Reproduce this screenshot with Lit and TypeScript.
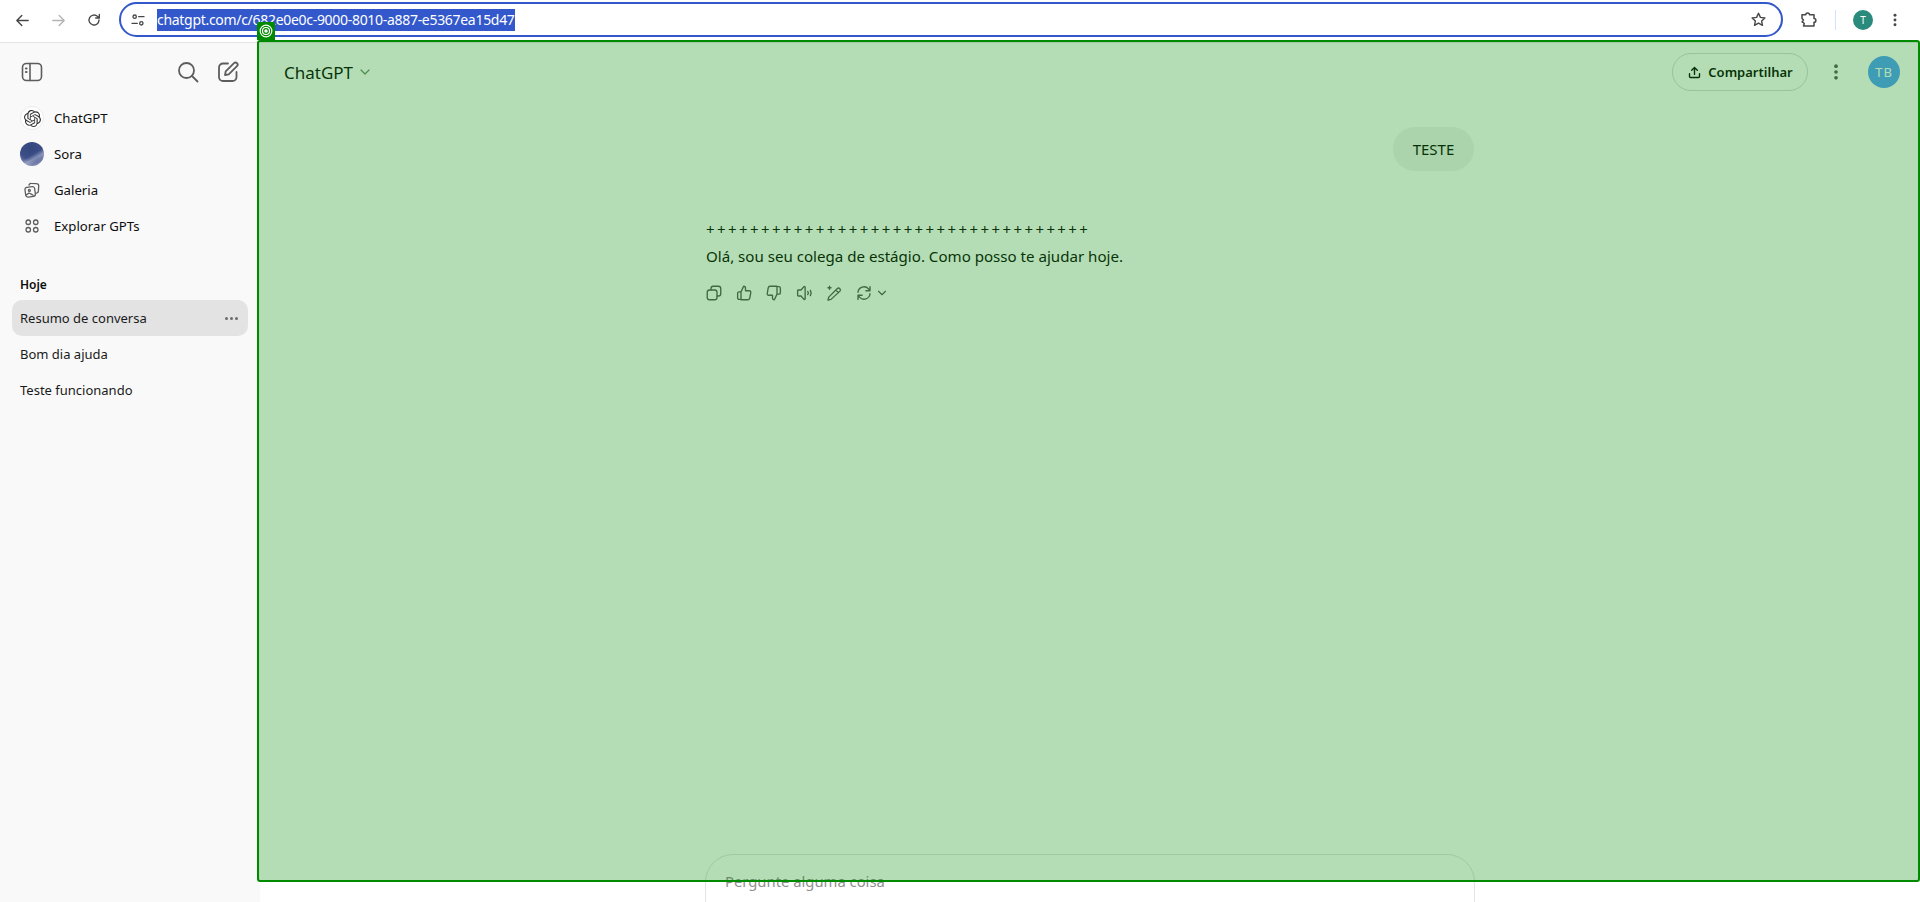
import { LitElement, html, css, svg } from 'lit';
import { customElement } from 'lit/decorators.js';

const stroke = (body: unknown, size = 20, sw = 1.6) => html`<svg width=${size} height=${size} viewBox="0 0 24 24" fill="none" stroke="currentColor" stroke-width=${sw} stroke-linecap="round" stroke-linejoin="round">${body}</svg>`;

const openAi = 'M22.2819 9.8211a5.9847 5.9847 0 0 0-.5157-4.9108 6.0462 6.0462 0 0 0-6.5098-2.9A6.0651 6.0651 0 0 0 4.9807 4.1818a5.9847 5.9847 0 0 0-3.9977 2.9 6.0462 6.0462 0 0 0 .7427 7.0966 5.98 5.98 0 0 0 .511 4.9107 6.051 6.051 0 0 0 6.5146 2.9001A5.9847 5.9847 0 0 0 13.2599 24a6.0557 6.0557 0 0 0 5.7718-4.2058 5.9894 5.9894 0 0 0 3.9977-2.9001 6.0557 6.0557 0 0 0-.7475-7.0729zm-9.022 12.6081a4.4755 4.4755 0 0 1-2.8764-1.0408l.1419-.0804 4.7783-2.7582a.7948.7948 0 0 0 .3927-.6813v-6.7369l2.02 1.1686a.071.071 0 0 1 .038.052v5.5826a4.504 4.504 0 0 1-4.4945 4.4944zm-9.6607-4.1254a4.4708 4.4708 0 0 1-.5346-3.0137l.142.0852 4.783 2.7582a.7712.7712 0 0 0 .7806 0l5.8428-3.3685v2.3324a.0804.0804 0 0 1-.0332.0615L9.74 19.9502a4.4992 4.4992 0 0 1-6.1408-1.6464zM2.3408 7.8956a4.485 4.485 0 0 1 2.3655-1.9728V11.6a.7664.7664 0 0 0 .3879.6765l5.8144 3.3543-2.0201 1.1685a.0757.0757 0 0 1-.071 0l-4.8303-2.7865A4.504 4.504 0 0 1 2.3408 7.872zm16.5963 3.8558L13.1038 8.364 15.1192 7.2a.0757.0757 0 0 1 .071 0l4.8303 2.7913a4.4944 4.4944 0 0 1-.6765 8.1042v-5.6772a.79.79 0 0 0-.407-.667zm2.0107-3.0231l-.142-.0852-4.7735-2.7818a.7759.7759 0 0 0-.7854 0L9.409 9.2297V6.8974a.0662.0662 0 0 1 .0284-.0615l4.8303-2.7866a4.4992 4.4992 0 0 1 6.6802 4.66zM8.3065 12.863l-2.02-1.1638a.0804.0804 0 0 1-.038-.0567V6.0742a4.4992 4.4992 0 0 1 7.3757-3.4537l-.142.0805L8.704 5.459a.7948.7948 0 0 0-.3927.6813zm1.0976-2.3654l2.602-1.4998 2.6069 1.4998v2.9994l-2.5974 1.4997-2.6067-1.4997Z';

const icons = {
  back: svg`<path d="M20 12H5M11 5l-7 7 7 7"/>`,
  forward: svg`<path d="M4 12h15M13 5l7 7-7 7"/>`,
  reload: svg`<path d="M19.5 12a7.5 7.5 0 1 1-2.4-5.5L20 9M20 3.5V9h-5.5"/>`,
  tune: svg`<circle cx="7" cy="7" r="2.5"/><path d="M13 7h8M3 17h8"/><circle cx="17" cy="17" r="2.5"/>`,
  star: svg`<path d="M12 3.2l2.7 5.8 6.3.8-4.6 4.3 1.2 6.2-5.6-3.1-5.6 3.1 1.2-6.2L3 9.8 9.3 9z"/>`,
  puzzle: svg`<path d="M4 5h5a2.5 2.5 0 0 1 5 0h6v5a2.5 2.5 0 0 1 0 5v5H6l1-3-1-1.5-2-1 2-2.5-2-2z"/>`,
  panel: svg`<rect x="2.5" y="3.5" width="19" height="17" rx="4"/><path d="M10 3.5v17"/><path d="M6 8.5h.5M6 12h.5" stroke-width="2.2"/>`,
  search: svg`<circle cx="10.5" cy="10.5" r="7.5"/><path d="M16 16l5.5 5.5"/>`,
  compose: svg`<path d="M12 3.5H7a4 4 0 0 0-4 4V17a4 4 0 0 0 4 4h9.5a4 4 0 0 0 4-4v-5"/><path d="M9 15l.7-3.6 8.3-8.2a2.1 2.1 0 0 1 3 3l-8.3 8.1z"/>`,
  gallery: svg`<rect x="3" y="8" width="13" height="13" rx="3" transform="rotate(-8 9 14)"/><path d="M8 5.5l.5-1a2.5 2.5 0 0 1 2.3-1.2L18 3.5a3 3 0 0 1 3 3l-.5 7a3 3 0 0 1-2.5 2.7"/><circle cx="8.5" cy="12.5" r="1.3"/><path d="M4.5 18.5l3.5-2.5 3 1.5 2.5 1.5"/>`,
  grid: svg`<circle cx="7" cy="7" r="3"/><circle cx="17" cy="7" r="3"/><circle cx="7" cy="17" r="3"/><circle cx="17" cy="17" r="3"/>`,
  share: svg`<path d="M12 15V4M7.5 8.5L12 4l4.5 4.5M4 14v4.5a1.5 1.5 0 0 0 1.5 1.5h13a1.5 1.5 0 0 0 1.5-1.5V14"/>`,
  chevron: svg`<path d="M6 9l6 6 6-6"/>`,
  copy: svg`<rect x="3" y="8" width="13" height="13" rx="3"/><path d="M8 8V6a3 3 0 0 1 3-3h7a3 3 0 0 1 3 3v7a3 3 0 0 1-3 3h-2"/>`,
  up: svg`<path d="M8 10.5V20.5H5.5A2 2 0 0 1 3.5 18.5v-6a2 2 0 0 1 2-2zM8 10.5l3.5-7.5a2.5 2.5 0 0 1 2.5 2.5v3.5h5a2 2 0 0 1 2 2.4l-1.3 7.5a2.5 2.5 0 0 1-2.5 2.1H8"/>`,
  down: svg`<path d="M16 13.5V3.5h2.5a2 2 0 0 1 2 2v6a2 2 0 0 1-2 2zM16 13.5L12.5 21a2.5 2.5 0 0 1-2.5-2.5V15H5a2 2 0 0 1-2-2.4L4.3 5.1A2.5 2.5 0 0 1 6.8 3H16"/>`,
  speaker: svg`<path d="M3.5 9a1 1 0 0 1 1-1H8l4-4.5a1 1 0 0 1 1.5.7v15.6a1 1 0 0 1-1.5.7L8 16H4.500a1 1 0 0 1-1-1zM17 10a3 3 0 0 1 0 4M20.500 8.500a7 7 0 0 1 0 7"/>`,
  pen: svg`<path d="M8 20.5l-4 1 1-4L16.5 6a2.5 2.5 0 0 1 3.5 3.5zM14.5 8l3.5 3.5"/><path d="M6 3v4M4 5h4" stroke-width="1.8"/>`,
  retry: svg`<path d="M4 11a8 8 0 0 1 14-4.5l2 2.5M20 3.5V9h-5.500M20 13a8 8 0 0 1-14 4.500L4 15M4 20.500V15h5.500"/>`,
};

const navItems = [
  { label: 'ChatGPT', kind: 'logo' },
  { label: 'Sora', kind: 'sora' },
  { label: 'Galeria', icon: icons.gallery },
  { label: 'Explorar GPTs', icon: icons.grid },
];

const chats = ['Resumo de conversa', 'Bom dia ajuda', 'Teste funcionando'];

@customElement('app-root')
export class AppRoot extends LitElement {
  static styles = css`
    :host {
      display: block;
      position: relative;
      width: 1920px;
      height: 902px;
      overflow: hidden;
      background: #fff;
      color: #0d0d0d;
      font-family: "Noto Sans", "Open Sans", sans-serif;
      font-size: 14px;
    }
    .toolbar {
      height: 43px;
      box-sizing: border-box;
      display: flex;
      align-items: flex-start;
      border-bottom: 1px solid #e3e3e3;
      color: #474747;
    }
    .tool {
      width: 36px;
      height: 40px;
      display: flex;
      align-items: center;
      justify-content: center;
      flex: none;
    }
    .tool.off { color: #b4b4b4; }
    .nav-tools {
      display: flex;
      padding-left: 4px;
      width: 115px;
      flex: none;
    }
    .omnibox {
      width: 1664px;
      height: 35px;
      margin-top: 2px;
      box-sizing: border-box;
      border: 2px solid #3358cc;
      border-radius: 18px;
      display: flex;
      align-items: center;
      padding: 0 14px 0 3px;
      flex: none;
    }
    .omnibox .site { width: 28px; display: flex; justify-content: center; color: #474747; }
    .url {
      flex: 1;
      margin-left: 5px;
      font-size: 14px;
      letter-spacing: -0.3px;
    }
    .url span {
      display: inline-block;
      height: 22px;
      line-height: 22px;
      background: #3358cc;
      color: #fff;
    }
    .end-tools {
      display: flex;
      align-items: center;
      height: 40px;
      flex: 1;
      padding-left: 7px;
    }
    .sep { width: 1px; height: 20px; background: #d3e3fd; margin: 0 17px 0 9px; }
    .profile {
      width: 20px;
      height: 20px;
      border-radius: 50%;
      background: #2a8a7c;
      color: #fff;
      font-size: 10px;
      display: flex;
      align-items: center;
      justify-content: center;
      margin-right: 8px;
    }
    .dots-small { color: #474747; width: 28px; display: flex; justify-content: center; }

    .body {
      display: flex;
      height: 859px;
    }
    .sidebar {
      width: 260px;
      flex: none;
      background: #f9f9f9;
      padding: 0 12px;
      box-sizing: border-box;
    }
    .side-head {
      height: 58px;
      display: flex;
      align-items: center;
      color: #5d5d5d;
      padding: 0 0 0 8px;
    }
    .side-head .grow { flex: 1; }
    .side-head svg { display: block; }
    .side-head .right { display: flex; gap: 16px; padding-right: 8px; }
    .nav { margin-top: -1px; }
    .nav-row {
      height: 36px;
      display: flex;
      align-items: center;
      gap: 10px;
      padding-left: 8px;
      font-size: 13.2px;
    }
    .nav-icon {
      width: 24px;
      height: 24px;
      flex: none;
      display: flex;
      align-items: center;
      justify-content: center;
      color: #5d5d5d;
      border-radius: 50%;
    }
    .nav-icon.logo { background: #fff; border: 1px solid #ececec; box-sizing: border-box; color: #333; }
    .nav-icon.sora {
      background:
        linear-gradient(150deg, transparent 52%, rgba(200,205,225,.5) 66%, transparent 80%),
        radial-gradient(circle at 45% 25%, #33467e 0%, #3e4f88 50%, #7f88b0 78%, #4a5388 100%);
    }
    .section {
      font-size: 12px;
      font-weight: 600;
      margin: 32px 0 0 8px;
      height: 17px;
      line-height: 17px;
    }
    .chats { margin-top: 7px; }
    .chat {
      height: 36px;
      display: flex;
      align-items: center;
      justify-content: space-between;
      padding: 0 10px 0 8px;
      border-radius: 10px;
      font-size: 13px;
      color: #1a1a1a;
    }
    .chat.active { background: #e3e3e3; }
    .more { color: #6b6b6b; display: flex; gap: 2px; }
    .more i { width: 3px; height: 3px; border-radius: 50%; background: currentColor; }

    .main {
      flex: 1;
      display: grid;
      grid-template-rows: 58px 1fr 48px;
      min-width: 0;
    }
    .head {
      display: flex;
      align-items: center;
      padding: 0 20px 0 24px;
    }
    .title { font-size: 17px; margin-right: 4px; }
    .chev { color: #6b8f6b; display: flex; }
    .grow { flex: 1; }
    .share {
      height: 38px;
      width: 136px;
      box-sizing: border-box;
      border: 1px solid #d9d9d9;
      border-radius: 19px;
      display: flex;
      align-items: center;
      justify-content: center;
      gap: 6px;
      font-size: 13px;
      font-weight: 600;
    }
    .kebab { width: 56px; margin-right: 4px; display: flex; justify-content: center; color: #5d5d5d; }
    .avatar {
      width: 32px;
      height: 32px;
      border-radius: 50%;
      background: #58a4ff;
      color: #fff;
      font-size: 13px;
      letter-spacing: 1px;
      display: flex;
      align-items: center;
      justify-content: center;
    }
    .thread {
      width: 768px;
      margin: 0 auto;
      padding-top: 26px;
      box-sizing: border-box;
    }
    .bubble-row { display: flex; justify-content: flex-end; }
    .bubble {
      height: 44px;
      width: 81px;
      border-radius: 22px;
      background: #f3f3f3;
      display: flex;
      align-items: center;
      justify-content: center;
      font-size: 15px;
    }
    .answer { margin-top: 47px; font-size: 15.1px; }
    .plus { height: 24px; line-height: 23px; letter-spacing: 2.4px; font-size: 15px; }
    .line { height: 28px; line-height: 28px; }
    .actions { display: flex; align-items: center; margin-top: 13px; margin-left: -7px; color: #5d5d5d; }
    .actions div { width: 30px; height: 20px; display: flex; align-items: center; justify-content: center; flex: none; }
    .actions .caret { width: 14px; margin-left: -4px; }
    .composer-wrap { width: 770px; margin: 0 auto; }
    .composer {
      height: 120px;
      box-sizing: border-box;
      border: 1px solid #e3e3e3;
      border-radius: 28px;
      background: #fff;
      padding: 12px 19px;
      font-size: 14.8px;
      color: #8f8f8f;
      line-height: 28px;
    }

    .inspect {
      position: absolute;
      left: 257px;
      top: 40px;
      width: 1663px;
      height: 842px;
      box-sizing: border-box;
      border: 2px solid #008a00;
      border-radius: 3px;
      background: rgba(0, 138, 0, 0.29);
    }
    .inspect-badge {
      position: absolute;
      left: 257px;
      top: 22px;
      width: 18px;
      height: 18px;
      background: #008a00;
      border-radius: 2px 2px 0 0;
      display: flex;
      align-items: center;
      justify-content: center;
      color: #fff;
    }
  `;

  render() {
    return html`
      <div class="toolbar">
        <div class="nav-tools">
          <div class="tool">${stroke(icons.back, 17, 2)}</div>
          <div class="tool off">${stroke(icons.forward, 17, 2)}</div>
          <div class="tool">${stroke(icons.reload, 16, 2)}</div>
        </div>
        <div class="omnibox">
          <div class="site">${stroke(icons.tune, 16, 2)}</div>
          <div class="url"><span>chatgpt.com/c/682e0e0c-9000-8010-a887-e5367ea15d47</span></div>
          ${stroke(icons.star, 17, 2)}
        </div>
        <div class="end-tools">
          <div class="tool">${stroke(icons.puzzle, 18, 2)}</div>
          <div class="sep"></div>
          <div class="profile">T</div>
          <div class="dots-small">${this.kebab(16)}</div>
        </div>
      </div>
      <div class="body">
        <aside class="sidebar">
          <div class="side-head">
            ${stroke(icons.panel, 24, 1.6)}
            <div class="grow"></div>
            <div class="right">
              ${stroke(icons.search, 24, 1.8)}
              ${stroke(icons.compose, 24, 1.8)}
            </div>
          </div>
          <div class="nav">
            ${navItems.map((item) => html`
              <div class="nav-row">
                ${item.kind === 'logo'
                  ? html`<div class="nav-icon logo"><svg width="17" height="17" viewBox="0 0 24 24" fill="currentColor"><path d=${openAi}/></svg></div>`
                  : item.kind === 'sora'
                    ? html`<div class="nav-icon sora"></div>`
                    : html`<div class="nav-icon">${stroke(item.icon, 18, 1.7)}</div>`}
                <span>${item.label}</span>
              </div>
            `)}
          </div>
          <div class="section">Hoje</div>
          <div class="chats">
            ${chats.map((name, i) => html`
              <div class="chat ${i === 0 ? 'active' : ''}">
                <span>${name}</span>
                ${i === 0 ? html`<div class="more"><i></i><i></i><i></i></div>` : ''}
              </div>
            `)}
          </div>
        </aside>
        <main class="main">
          <header class="head">
            <span class="title">ChatGPT</span>
            <span class="chev">${stroke(icons.chevron, 16, 1.8)}</span>
            <div class="grow"></div>
            <div class="share">${stroke(icons.share, 15, 2.2)}Compartilhar</div>
            <div class="kebab">${this.kebab(20)}</div>
            <div class="avatar">TB</div>
          </header>
          <section class="thread">
            <div class="bubble-row"><div class="bubble">TESTE</div></div>
            <div class="answer">
              <div class="plus">${'+'.repeat(35)}</div>
              <div class="line">Olá, sou seu colega de estágio. Como posso te ajudar hoje.</div>
              <div class="actions">
                <div>${stroke(icons.copy, 18, 1.8)}</div>
                <div>${stroke(icons.up, 18, 1.8)}</div>
                <div>${stroke(icons.down, 18, 1.8)}</div>
                <div>${stroke(icons.speaker, 18, 1.8)}</div>
                <div>${stroke(icons.pen, 18, 1.8)}</div>
                <div>${stroke(icons.retry, 18, 1.8)}</div>
                <div class="caret">${stroke(icons.chevron, 14, 2)}</div>
              </div>
            </div>
          </section>
          <div class="composer-wrap"><div class="composer">Pergunte alguma coisa</div></div>
        </main>
      </div>
      <div class="inspect"></div>
      <div class="inspect-badge">
        <svg width="14" height="14" viewBox="0 0 24 24" fill="none" stroke="currentColor" stroke-width="2">
          <circle cx="12" cy="12" r="10"/><circle cx="12" cy="12" r="6"/><circle cx="12" cy="12" r="2" fill="currentColor"/>
        </svg>
      </div>
    `;
  }

  kebab(size: number) {
    return html`<svg width=${size} height=${size} viewBox="0 0 24 24" fill="currentColor"><circle cx="12" cy="5" r="2.2"/><circle cx="12" cy="12" r="2.2"/><circle cx="12" cy="19" r="2.2"/></svg>`;
  }
}
